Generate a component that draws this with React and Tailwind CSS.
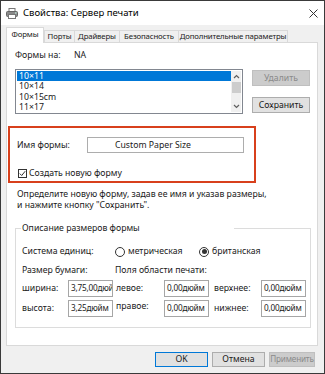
import React from 'react';

const font = "font-['Noto_Sans',_'Liberation_Sans',_sans-serif]";

function Chevron({ up }) {
  return (
    <svg width="7" height="5" viewBox="0 0 7 5">
      <path d={up ? 'M1 4 L3.5 1.5 L6 4' : 'M1 1 L3.5 3.5 L6 1'} fill="none" stroke="#606060" strokeWidth="1.2" />
    </svg>
  );
}

function PrinterIcon() {
  return (
    <svg width="12" height="11" viewBox="0 0 12 11">
      <rect x="3" y="0.5" width="6" height="3" fill="#fff" stroke="#777" />
      <rect x="0.5" y="3.5" width="11" height="5" rx="1" fill="#8a8a8a" stroke="#666" />
      <rect x="2.5" y="6.5" width="7" height="4" fill="#fff" stroke="#777" />
      <rect x="9" y="4.5" width="1.5" height="1" fill="#cfe" />
    </svg>
  );
}

function Radio({ checked, label }) {
  return (
    <div className="flex items-center">
      <div className="w-[10px] h-[10px] rounded-full border border-[#333] flex items-center justify-center bg-white">
        {checked && <div className="w-[5px] h-[5px] rounded-full bg-[#333]" />}
      </div>
      <span className="ml-[3px]">{label}</span>
    </div>
  );
}

function Field({ value }) {
  return (
    <div className="h-[17px] w-[45px] bg-white border border-[#a6a6a6] flex items-center pl-[2px] overflow-hidden whitespace-nowrap text-[8.2px] tracking-[-0.2px]">
      {value}
    </div>
  );
}

export default function App() {
  const tabs = [
    { name: 'Формы', w: 'w-[38px]' },
    { name: 'Порты', w: 'w-[30px]' },
    { name: 'Драйверы', w: 'w-[45px]' },
    { name: 'Безопасность', w: 'w-[59px]' },
    { name: 'Дополнительные параметры', w: 'w-[110px]' },
  ];
  const forms = ['10×11', '10×14', '10×15cm', '11×17'];

  return (
    <div className={`w-[325px] h-[374px] border border-[#3a3a3a] bg-[#f0f0f0] flex flex-col text-[8.7px] leading-none text-[#1a1a1a] ${font}`}>
      {/* Title bar */}
      <div className="h-[24px] bg-white flex items-center pl-[5px] pr-[5px]">
        <PrinterIcon />
        <span className="ml-[5px] text-[9.5px] text-black">Свойства: Сервер печати</span>
        <svg className="ml-auto mr-[1px]" width="9" height="9" viewBox="0 0 9 9">
          <path d="M0.5 0.5 L8.5 8.5 M8.5 0.5 L0.5 8.5" stroke="#333" strokeWidth="1" />
        </svg>
      </div>

      {/* Tabs */}
      <div className="flex items-end pl-[5px] mt-[1px] h-[16px]">
        {tabs.map((t, i) => (
          <div
            key={t.name}
            className={`${t.w} flex items-center justify-center whitespace-nowrap text-[7.8px] tracking-[-0.15px] ${i === 0
              ? 'h-[16px] bg-white border-l border-t border-r border-[#d9d9d9] relative z-10 -mb-px pb-[1px]'
              : 'h-[12px] bg-[#f0f0f0] border-l border-t border-[#d9d9d9] last:border-r'}`}
          >
            {t.name}
          </div>
        ))}
      </div>

      {/* Panel */}
      <div className="ml-[5px] w-[312px] h-[304px] bg-white border border-[#d9d9d9] flex flex-col">
        <div className="flex items-center h-[12px] mt-[6px] ml-[8px]">
          <span className="w-[59px]">Формы на:</span>
          <span>NA</span>
        </div>

        <div className="flex mt-[8px] ml-[8px]">
          <div className="w-[228px] h-[45px] border border-[#828790] flex p-[1px]">
            <div className="flex-1 flex flex-col">
              {forms.map((f, i) => (
                <div key={f} className={`h-[10.5px] leading-[10px] flex items-center pl-[2px] ${i === 0 ? 'bg-[#0078d7] text-white' : ''}`}>
                  {f}
                </div>
              ))}
            </div>
            <div className="w-[10px] bg-[#f0f0f0] flex flex-col items-center">
              <div className="h-[11px] flex items-center"><Chevron up /></div>
              <div className="w-[9px] h-[11px] bg-[#cdcdcd]" />
              <div className="flex-1" />
              <div className="h-[11px] flex items-center"><Chevron /></div>
            </div>
          </div>
          <div className="ml-[9px] flex flex-col">
            <div className="w-[58px] h-[16px] mt-[1px] bg-[#cccccc] border border-[#bfbfbf] text-[#8a8a8a] flex items-center justify-center">
              Удалить
            </div>
            <div className="w-[58px] h-[16px] mt-[11px] bg-[#e1e1e1] border border-[#adadad] flex items-center justify-center">
              Сохранить
            </div>
          </div>
        </div>

        {/* Highlighted box */}
        <div className="ml-[1px] mt-[12px] w-[248px] h-[57px] border-2 border-[#d8401c] flex flex-col pl-[7px] pt-[9px]">
          <div className="flex items-center">
            <span className="w-[70px]">Имя формы:</span>
            <div className="w-[157px] h-[16px] border border-[#adadad] flex items-center pl-[27px]">
              Custom Paper Size
            </div>
          </div>
          <div className="flex items-center mt-[16px] ml-[1px]">
            <div className="w-[9px] h-[9px] border border-[#333] flex items-center justify-center">
              <svg width="7" height="7" viewBox="0 0 7 7">
                <path d="M0.8 3.6 L2.7 5.5 L6.2 1.2" fill="none" stroke="#333" strokeWidth="1" />
              </svg>
            </div>
            <span className="ml-[2px]">Создать новую форму</span>
          </div>
        </div>

        <div className="ml-[10px] mt-[6px] leading-[11px]">
          <div>Определите новую форму, задав ее имя и указав размеры,</div>
          <div>и нажмите кнопку "Сохранить".</div>
        </div>

        {/* Group box */}
        <div className="ml-[8px] mt-[17px] w-[296px] h-[100px] border border-[#dcdcdc] relative flex flex-col pl-[6px]">
          <div className="absolute -top-[6px] left-[5px] w-[213px] bg-white pl-[1px] h-[11px] flex items-center">
            Описание размеров формы
          </div>
          <div className="flex items-center mt-[17px] h-[11px]">
            <span className="w-[93px]">Система единиц:</span>
            <div className="w-[84px]"><Radio label="метрическая" /></div>
            <Radio checked label="британская" />
          </div>
          <div className="flex items-center mt-[8px] h-[11px]">
            <span className="w-[93px]">Размер бумаги:</span>
            <span>Поля области печати:</span>
          </div>
          <div className="flex items-center mt-[4px]">
            <span className="w-[46px]">ширина:</span>
            <Field value="3,75,00дюйм" />
            <span className="w-[51px] pl-[3px]">левое:</span>
            <Field value="0,00дюйм" />
            <span className="w-[52px] pl-[5px]">верхнее:</span>
            <Field value="0,00дюйм" />
          </div>
          <div className="flex items-center mt-[3px]">
            <span className="w-[46px]">высота:</span>
            <Field value="3,25дюйм" />
            <span className="w-[51px] pl-[3px] self-start mt-[2px]">правое:</span>
            <Field value="0,00дюйм" />
            <span className="w-[52px] pl-[5px]">нижнее:</span>
            <Field value="0,00дюйм" />
          </div>
        </div>
      </div>

      {/* Bottom buttons */}
      <div className="flex mt-[6px] pl-[154px]">
        <div className="w-[53px] h-[15px] bg-[#e1e1e1] border border-[#0078d7] flex items-center justify-center">OK</div>
        <div className="ml-[4px] w-[53px] h-[15px] bg-[#e1e1e1] border border-[#adadad] flex items-center justify-center">Отмена</div>
        <div className="ml-[4px] w-[46px] h-[15px] bg-[#cccccc] border border-[#bfbfbf] text-[#8a8a8a] flex items-center justify-center text-[8.2px] tracking-[-0.2px]">Применить</div>
      </div>
    </div>
  );
}
